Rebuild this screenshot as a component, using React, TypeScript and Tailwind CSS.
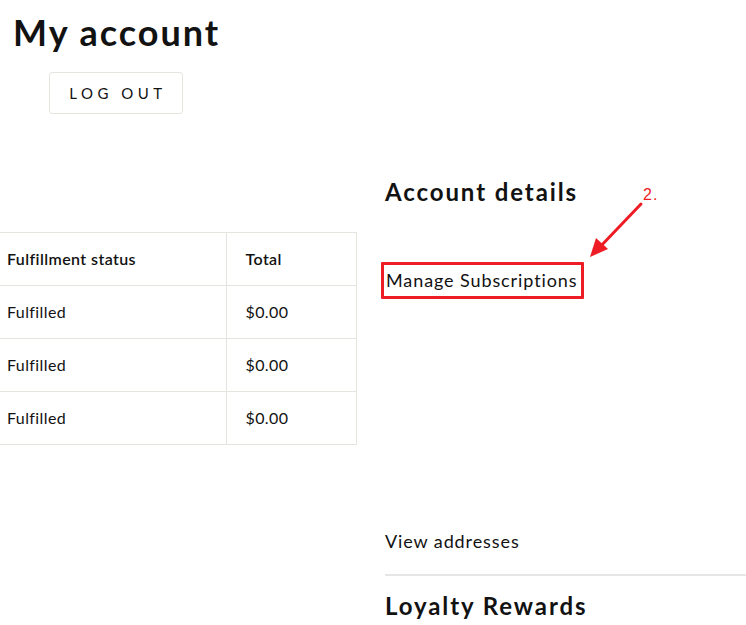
export default function App() {
  const rows = ["$0.00", "$0.00", "$0.00"];

  return (
    <div className="relative min-h-[625px] w-[746px] overflow-hidden bg-white font-['Lato',sans-serif] text-[#121212]">
      <div className="pt-[11px]">
        <h1 className="ml-[13px] text-[36px] font-bold leading-[1.2] tracking-[2px]">My account</h1>
        <button className="ml-[49px] mt-[18px] flex h-[42px] w-[134px] items-center justify-center rounded-[3px] border border-[#e6e4de] pl-[4px] text-[15px] uppercase tracking-[0.3em]">
          Log out
        </button>
      </div>

      <div className="mt-[64px] grid grid-cols-[357px_1fr] gap-x-[28px]">
        <div className="pt-[54px]">
          <table className="w-[357px] border-collapse text-[16px] tracking-[0.4px]">
            <thead>
              <tr className="h-[53px] border-y border-[#e6e4de]">
                <th className="w-[226px] pl-[7px] text-left font-semibold">Fulfillment status</th>
                <th className="border-x border-[#e6e4de] pl-[19px] text-left font-semibold">Total</th>
              </tr>
            </thead>
            <tbody>
              {rows.map((total, i) => (
                <tr key={i} className="h-[53px] border-b border-[#e6e4de]">
                  <td className="pl-[7px]">Fulfilled</td>
                  <td className="border-x border-[#e6e4de] pl-[19px]">{total}</td>
                </tr>
              ))}
            </tbody>
          </table>
        </div>

        <div className="flex flex-col">
          <h2 className="text-[24px] font-bold leading-[1.2] tracking-[1.9px]">Account details</h2>
          <div className="relative ml-[1px] mt-[63px] self-start text-[18px] leading-[1.2] tracking-[0.9px]">
            Manage Subscriptions
            <span className="absolute left-[-5px] top-[-8px] h-[37px] w-[203px] rounded-[1px] border-[3px] border-[#ee1c24]" />
          </div>
          <div className="mt-[239px] text-[18px] leading-[1.2] tracking-[0.9px]">View addresses</div>
          <div className="mt-[22px] h-[2px] bg-[#e6e6e6]" />
          <h2 className="mt-[16px] text-[24px] font-bold leading-[1.2] tracking-[1.9px]">Loyalty Rewards</h2>
        </div>
      </div>

      {/* annotation */}
      <span className="absolute left-[643px] top-[187px] font-['Liberation_Sans',sans-serif] text-[16px] leading-none tracking-[1px] text-[#ee1c24]">
        2.
      </span>
      <svg className="absolute left-[580px] top-[195px]" width="70" height="70" viewBox="0 0 70 70">
        <line x1="61" y1="9" x2="18" y2="54" stroke="#ee1c24" strokeWidth="3" strokeLinecap="round" />
        <polygon points="10,62 16,43 28,54" fill="#ee1c24" />
      </svg>
    </div>
  );
}
